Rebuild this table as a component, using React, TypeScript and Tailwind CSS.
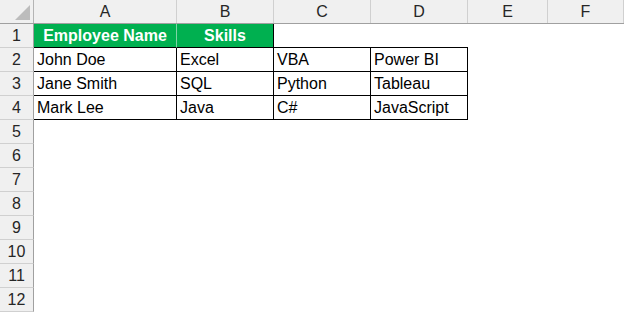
import * as React from 'react';

const columns = ['A', 'B', 'C', 'D', 'E', 'F'];

const colWidths = ['w-[143px]', 'w-[97px]', 'w-[97px]', 'w-[97px]', 'w-[80px]', 'flex-1'];

const data = [
    ['John Doe', 'Excel', 'VBA', 'Power BI'],
    ['Jane Smith', 'SQL', 'Python', 'Tableau'],
    ['Mark Lee', 'Java', 'C#', 'JavaScript'],
];

// header letters A..F
const ColumnHeader = () => (
    <div className="flex h-[24px] bg-[#f0f0f0] border-b border-[#a0a0a0]">
        <div className="relative w-[34px] shrink-0 border-r border-[#b4b4b4]">
            <svg className="absolute left-0 top-0" width="33" height="23" viewBox="0 0 33 23">
                <polygon points="15,20 30,5 30,20" fill="#bcbcbc" />
            </svg>
        </div>
        {columns.map((col, index) => (
            <div
                key={col}
                className={`${colWidths[index]} shrink-0 flex items-center justify-center border-r border-[#d0d0d0] text-[16px] text-[#262626]`}
            >
                {col}
            </div>
        ))}
    </div>
);

const RowHeader = ({ n }: { n: number }) => (
    <div className="w-[34px] shrink-0 flex items-center justify-center bg-[#f0f0f0] border-r border-[#a0a0a0] border-b border-b-[#d0d0d0] text-[16px] text-[#262626]">
        {n}
    </div>
);

export default function App() {
    const emptyRows = [5, 6, 7, 8, 9, 10, 11, 12];

    return (
        <div
            className="w-[624px] h-[313px] overflow-hidden bg-white text-black"
            style={{ fontFamily: '"Liberation Sans", Arial, sans-serif' }}
        >
            <ColumnHeader />

            {/* row 1: green titles */}
            <div className="flex h-[24px]">
                <RowHeader n={1} />
                <div className="w-[143px] shrink-0 flex items-center justify-center bg-[#00b050] border-r border-[#7fd4a6] border-b border-b-black text-[16px] font-bold text-white">
                    Employee Name
                </div>
                <div className="w-[97px] shrink-0 flex items-center justify-center bg-[#00b050] border-r border-black border-b border-b-black text-[16px] font-bold text-white">
                    Skills
                </div>
                <div className="w-[97px] shrink-0 border-b border-black" />
                <div className="w-[97px] shrink-0 border-b border-black" />
            </div>

            {/* rows 2-4 */}
            {data.map((row, r) => (
                <div key={r} className="flex h-[24px]">
                    <RowHeader n={r + 2} />
                    {row.map((cell, c) => (
                        <div
                            key={c}
                            className={`${colWidths[c]} shrink-0 flex items-center pl-[3px] border-r border-b border-black text-[16px]`}
                        >
                            {cell}
                        </div>
                    ))}
                </div>
            ))}

            {emptyRows.map((n) => (
                <div key={n} className="flex h-[24px]">
                    <RowHeader n={n} />
                </div>
            ))}
        </div>
    );
}
